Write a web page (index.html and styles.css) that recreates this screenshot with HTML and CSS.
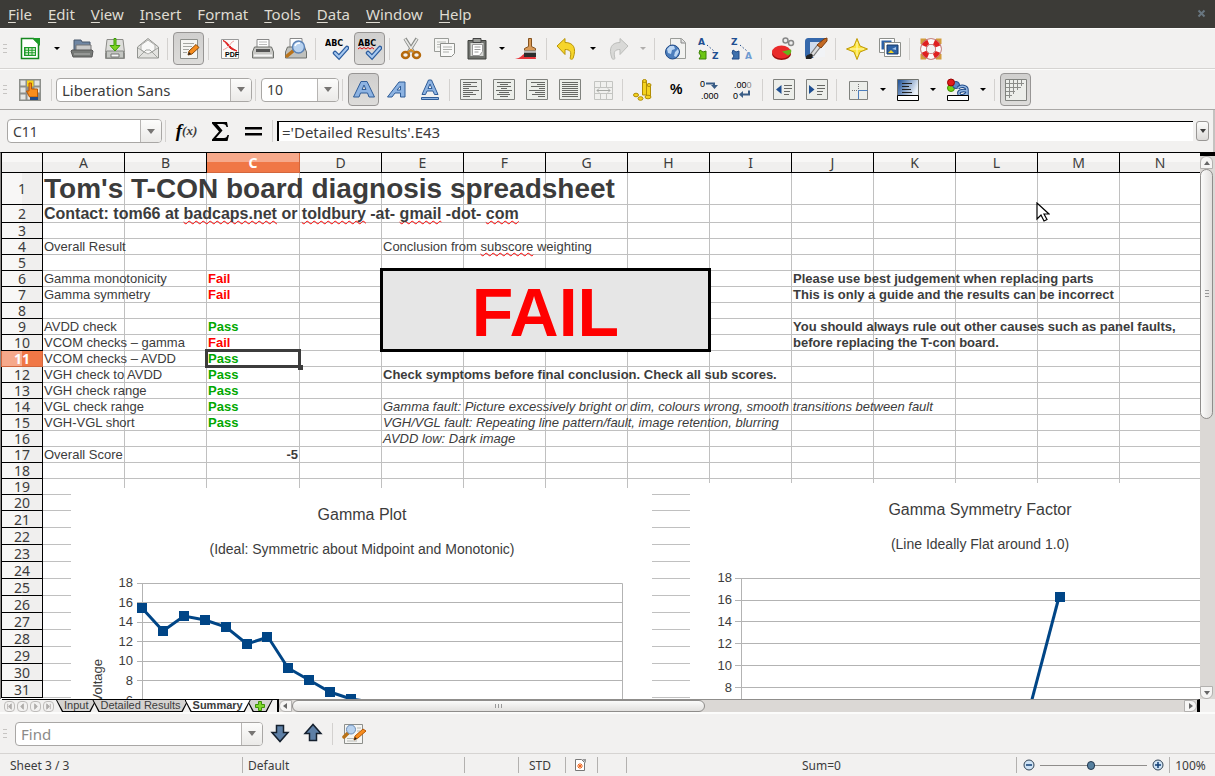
FILE: index.html
```
<!doctype html>
<html lang="en">
    <head>
        <meta charset="UTF-8" />
        <meta name="viewport" content="width=device-width, initial-scale=1.0" />
        <title>T-CON board diagnosis | Calc</title>
        <link rel="stylesheet" href="styles.css">
    </head>
    <body>
        <nav class="menubar">
            <button><u>F</u>ile</button>
            <button><u>E</u>dit</button>
            <button><u>V</u>iew</button>
            <button><u>I</u>nsert</button>
            <button>F<u>o</u>rmat</button>
            <button><u>T</u>ools</button>
            <button><u>D</u>ata</button>
            <button><u>W</u>indow</button>
            <button><u>H</u>elp</button>
            <button class="close" aria-label="Close">
                <svg width="10" height="10" viewBox="0 0 10 10"><path d="M1.500 1.500l6 6M7.500 1.500l-6 6" stroke="#68757f" stroke-width="2" /></svg>
            </button>
        </nav>

        <!-- standard toolbar -->
        <div class="toolbar">
            <span class="grip"></span>
            <button class="tool" aria-label="New">
                <svg viewBox="0 0 24 24"><path d="M3.500 1.500h12l5 5v15h-17z" fill="#fff" stroke="#16871f" stroke-width="1.500" /><path d="M14 1h8v8z" fill="#1d9a28" /><path d="M6 10h12v9H6z" fill="#1c9a28" /><path d="M7.500 12h2.500M11 12h2.500M14.500 12h2.500M7.500 14.500h2.500M11 14.500h2.500M14.500 14.500h2.500M7.500 17h2.500M11 17h2.500M14.500 17h2.500" stroke="#dff5d8" stroke-width="1.500" /></svg>
            </button>
            <button class="drop" aria-label="New options"></button>
            <button class="tool" aria-label="Open">
                <svg viewBox="0 0 24 24"><path d="M4 3h7l1 2h8v9H4z" fill="#6f86a3" stroke="#49566b" /><path d="M6 8h15v7H6z" fill="#c9c9c9" stroke="#777" /><path d="M2 13h20l1 1-1 6H3l-2-6z" fill="#777a77" stroke="#565656" /><path d="M4 17h16" stroke="#b5b5b5" /></svg>
            </button>
            <button class="tool" aria-label="Save">
                <svg viewBox="0 0 24 24"><path d="M4 2.500h16l1.500 13v6h-19v-6z" fill="#dededb" stroke="#8c8c88" /><path d="M3.500 14h17v7h-17z" fill="#c4c6c2" stroke="#858783" /><path d="M8 17h8v3H8z" fill="#f7f7f7" stroke="#777" /><path d="M11 1.500h2v7h4l-5 5.500-5-5.500h4z" fill="#7ed321" stroke="#3a9a08" /></svg>
            </button>
            <button class="tool" aria-label="E-mail">
                <svg viewBox="0 0 24 24"><path d="M1.500 10L12 1.500 22.500 10v11h-21z" fill="#e3e3e0" stroke="#929490" /><path d="M5 8l7-5 7 5v5l-7 4-7-4z" fill="#f8f8f7" stroke="#b0b0ad" /><path d="M2 21l8-8h4l8 8M2 11l8 5M22 11l-8 5" fill="none" stroke="#a3a5a1" /></svg>
            </button>
            <span class="sep"></span>
            <button class="tool on" aria-label="Edit file">
                <svg viewBox="0 0 24 24"><path d="M3.500 2.500h17v19h-17z" fill="#f5f5f3" stroke="#8d8f8b" /><path d="M6 6.500h11M6 9.500h9M6 12.500h6M6 15.500h4" stroke="#a4a6a2" /><path d="M11 18l1-4 7-6.500 3 3-7 6.500z" fill="#f78d1e" stroke="#8b4a08" /><path d="M11 18l1-3 2 2z" fill="#222" /></svg>
            </button>
            <span class="sep"></span>
            <button class="tool" aria-label="Export as PDF">
                <svg viewBox="0 0 24 24"><path d="M3.500 2.500h17v19h-17z" fill="#fbfbfa" stroke="#999" /><path d="M5 3.500c3 1 5 3 7 5.500s4 3 7 5c-4-1-7-2-9-5S7 5 5 3.500z" fill="#df2222" stroke="#df2222" /><path d="M16 4c-3 1-3 3-5 5s-4 3-6 4" fill="none" stroke="#f0a0a0" /><text x="7" y="20" font-size="7" font-weight="bold" font-family="Liberation Sans">PDF</text></svg>
            </button>
            <button class="tool" aria-label="Print">
                <svg viewBox="0 0 24 24"><path d="M6 2.500h12v9H6z" fill="#fff" stroke="#888" /><path d="M8 5h8M8 7.500h8" stroke="#bbb" /><path d="M3.500 10h17l2 5v6h-21v-6z" fill="#c8c8c5" stroke="#6e706c" /><path d="M5 12h14v3H5z" fill="#555" /><path d="M3 18.500h18" stroke="#f5f5f5" stroke-width="2" /></svg>
            </button>
            <button class="tool" aria-label="Page preview">
                <svg viewBox="0 0 24 24"><path d="M6 1.500h12v9H6z" fill="#fff" stroke="#888" /><path d="M3.500 10h17l2 5v6h-21v-6z" fill="#c0c1bd" stroke="#6e706c" /><path d="M9 14l-6 5" stroke="#b9731a" stroke-width="3.500" stroke-linecap="round" /><circle cx="14.500" cy="10" r="6" fill="#b8d2ef" stroke="#5b82b5" stroke-width="1.500" /><path d="M11 9c1-3 3-3 5-3" stroke="#fff" stroke-width="1.500" fill="none" /></svg>
            </button>
            <span class="sep"></span>
            <button class="tool" aria-label="Spelling and grammar">
                <svg viewBox="0 0 24 24"><text x="0" y="9" font-size="8" font-weight="bold" font-family="DejaVu Sans">ABC</text><path d="M10 16l4 4 8-9" fill="none" stroke="#2b5c9e" stroke-width="4.500" stroke-linecap="round" /><path d="M10 16l4 4 8-9" fill="none" stroke="#a6c8f0" stroke-width="2" stroke-linecap="round" /></svg>
            </button>
            <button class="tool on" aria-label="AutoSpellcheck">
                <svg viewBox="0 0 24 24"><text x="0" y="9" font-size="8" font-weight="bold" font-family="DejaVu Sans">ABC</text><path d="M0 12l2-1.500 2 1.500 2-1.500 2 1.500 2-1.500 2 1.500 2-1.500 2 1.500" fill="none" stroke="#e01010" /><path d="M10 16l4 4 8-9" fill="none" stroke="#2b5c9e" stroke-width="4.500" stroke-linecap="round" /><path d="M10 16l4 4 8-9" fill="none" stroke="#a6c8f0" stroke-width="2" stroke-linecap="round" /></svg>
            </button>
            <span class="sep"></span>
            <button class="tool" aria-label="Cut">
                <svg viewBox="0 0 24 24"><path d="M6 1.500L15 16M18 1.500L9 16" stroke="#8a8c88" stroke-width="3.500" /><path d="M6 2l9 14M18 2L9 16" stroke="#e8e8e6" stroke-width="1.500" /><ellipse cx="6.500" cy="18" rx="3.500" ry="3" fill="none" stroke="#b5690c" stroke-width="2.500" /><ellipse cx="17.500" cy="18" rx="3.500" ry="3" fill="none" stroke="#b5690c" stroke-width="2.500" /><path d="M9 15l3-2 3 2" stroke="#d98c21" stroke-width="2" fill="none" /></svg>
            </button>
            <button class="tool" aria-label="Copy">
                <svg viewBox="0 0 24 24"><path d="M2.500 1.500h14v13h-14z" fill="#f6f6f4" stroke="#9a9c98" /><path d="M5 5h9M5 7.500h9M5 10h4" stroke="#b9bbb7" /><path d="M8.500 6.500h14v10l-3 3h-11z" fill="#f9f9f8" stroke="#8d8f8b" /><path d="M11 10h9M11 12.500h9M11 15h6" stroke="#aeb0ac" /></svg>
            </button>
            <button class="tool" aria-label="Paste">
                <svg viewBox="0 0 24 24"><path d="M3 3.500h18v18.500H3z" fill="#70726e" stroke="#3f413d" /><path d="M5.500 6h13v13h-13z" fill="#d7d8d5" /><path d="M8 1.500h8v4H8z" fill="#989a96" stroke="#444" /><path d="M7.500 7.500h10v7l-3 4h-7z" fill="#fff" stroke="#999" /><path d="M9.500 10h6M9.500 12.500h6M9.500 15h4" stroke="#999" /></svg>
            </button>
            <button class="drop" aria-label="Paste options"></button>
            <button class="tool" aria-label="Format paintbrush">
                <svg viewBox="0 0 24 24"><path d="M0 22c6-1 7-4 9-5h11l1 5z" fill="#e8353b" /><path d="M13.500 1.500h3v8l4 2v2h-11v-2l4-2z" fill="#d89a58" stroke="#85531f" /><path d="M9 15.500h12V20H9z" fill="#2d2d2d" /><path d="M9 14.500h12" stroke="#bbb" stroke-width="2" /></svg>
            </button>
            <span class="sep"></span>
            <button class="tool" aria-label="Undo">
                <svg viewBox="0 0 24 24"><path d="M9 1.500v4c8 0 12 5 8 16-1 1-2 1-3 0 2-7 0-9-5-9v5L1 9z" fill="#f6d52c" stroke="#b89406" /></svg>
            </button>
            <button class="drop" aria-label="Undo history"></button>
            <button class="tool" aria-label="Redo">
                <svg viewBox="0 0 24 24"><path d="M14 1.500v4c-8 0-12 5-8 16 1 1 2 1 3 0-2-7 0-9 5-9v5L22 9z" fill="#d9d9d7" stroke="#bcbdba" /></svg>
            </button>
            <button class="drop faint" aria-label="Redo history"></button>
            <span class="sep"></span>
            <button class="tool" aria-label="Hyperlink">
                <svg viewBox="0 0 24 24"><path d="M6.500 1.500h11l4 4v16h-15z" fill="#f2f2f0" stroke="#9a9c98" /><path d="M17 2v4h4" fill="#ddd" stroke="#888" /><circle cx="8.500" cy="15" r="7" fill="#4c7ebd" stroke="#204a87" /><path d="M3 12l3-3 4 0 1 3-3 1-1 4-3-1zM11 15l3-3 1 3-3 5-2-1z" fill="#bcd6f3" /></svg>
            </button>
            <button class="tool" aria-label="Sort ascending">
                <svg viewBox="0 0 24 24"><text class="ltr" x="1" y="8">A</text><text class="ltr" x="15" y="22">Z</text><path d="M10 8l7 6" stroke="#204a87" stroke-dasharray="1.500 2" /><path d="M3 13l3 2 3-1v8H2l2-3-2-3z" fill="#6cc613" stroke="#3a8204" /></svg>
            </button>
            <button class="tool" aria-label="Sort descending">
                <svg viewBox="0 0 24 24"><text class="ltr" x="1" y="8">Z</text><text class="ltr pale" x="15" y="22">A</text><path d="M10 8l7 6" stroke="#204a87" stroke-dasharray="1.500 2" /><path d="M3 13l3 2 3-1v8H2l2-3-2-3z" fill="#3f71ad" stroke="#204a87" /></svg>
            </button>
            <span class="sep"></span>
            <button class="tool" aria-label="Insert chart">
                <svg viewBox="0 0 24 24"><ellipse cx="10.500" cy="17" rx="9.500" ry="6" fill="#9c0d0d" /><ellipse cx="10.500" cy="15" rx="9.500" ry="6.500" fill="#ea2a2a" /><path d="M11 14.500l9-2c1 3-1 5-3 6z" fill="#63b51a" /><circle cx="14.500" cy="3.500" r="2.500" fill="#eee" stroke="#888" stroke-width="1.500" /><circle cx="20" cy="6" r="2.500" fill="#eee" stroke="#888" stroke-width="1.500" /></svg>
            </button>
            <button class="tool" aria-label="Show draw functions">
                <svg viewBox="0 0 24 24"><path d="M1 5c0-3 1-4 4-4h17L9 21H4c-2 0-3-1-3-3z" fill="#3568ab" /><path d="M6 5h15v15H6z" fill="#f1f3f6" /><path d="M6 5h15L6 17z" fill="#cfdced" /><path d="M8 18l7-9" stroke="#777" stroke-width="4.500" /><path d="M8 18l7-9" stroke="#ddd" stroke-width="2.500" /><path d="M13 8l7-6 3-1v3l-6 7z" fill="#c36a24" stroke="#7d3c0b" /><path d="M2 22c-1-3 1-4 4-5s4 3 1 5z" fill="#222" /></svg>
            </button>
            <span class="sep"></span>
            <button class="tool" aria-label="Navigator">
                <svg viewBox="0 0 24 24"><path d="M12 1.500l3 7.500 7.500 3-7.500 3-3 7.500L9 15l-7.500-3L9 9z" fill="#fbe338" stroke="#bf9a06" /><path d="M12 5v14M5 12h14" stroke="#fff9c0" /></svg>
            </button>
            <button class="tool" aria-label="Gallery">
                <svg viewBox="0 0 24 24"><path d="M1.500 1.500h15v14h-15z" fill="#fff" stroke="#8d8f8b" /><path d="M3.500 3.500h10v9h-10z" fill="#2d61a5" /><path d="M6.500 5.500h16v14h-16z" fill="#fff" stroke="#8d8f8b" /><path d="M9 8h11v9H9z" fill="#2d61a5" stroke="#173a6b" /><path d="M10 16l3-3 3 3z" fill="#f4d325" /><path d="M14 12l4-2v3z" fill="#a5c5ec" /></svg>
            </button>
            <span class="sep"></span>
            <button class="tool" aria-label="Help">
                <svg viewBox="0 0 24 24"><path d="M3 7V3h4M17 3h4v4M21 17v4h-4M7 21H3v-4" fill="none" stroke="#d39c3b" stroke-width="3" /><circle cx="12" cy="12" r="7.500" fill="none" stroke="#b66" stroke-width="6.500" /><circle cx="12" cy="12" r="7.500" fill="none" stroke="#fafafa" stroke-width="5" /><circle cx="12" cy="12" r="7.500" fill="none" stroke="#df2020" stroke-width="5" stroke-dasharray="5.900 5.880" stroke-dashoffset="-2.900" /></svg>
            </button>
        </div>

        <!-- formatting toolbar -->
        <div class="toolbar format">
            <span class="grip"></span>
            <button class="tool" aria-label="Styles and formatting">
                <svg viewBox="0 0 24 24"><path d="M1 1h22v22H1z" fill="#8d8f8b" /><path d="M2.500 2.500h5v5h-5zM2.500 9.500h5v5h-5zM2.500 16.500h5v5h-5zM16.500 2.500h5v5h-5zM16.500 9.500h5v5h-5zM9.500 16.500h5v5h-5z" fill="#e5e6e3" /><path d="M9 2.500h6.500v6H9z" fill="#f7d31d" /><path d="M11 5h2.500v6h6v8h-8l-3-6h2.500z" fill="#f78d1e" stroke="#b55705" /><path d="M12 19h8v3h-8z" fill="#204a87" /></svg>
            </button>
            <span class="sep"></span>
            <div class="combo font">
                <input value="Liberation Sans" aria-label="Font name">
                <button aria-label="Font list"></button>
            </div>
            <span class="sep"></span>
            <div class="combo size">
                <input value="10" aria-label="Font size">
                <button aria-label="Size list"></button>
            </div>
            <span class="sep"></span>
            <button class="tool on" aria-label="Bold">
                <svg viewBox="0 0 24 24"><path class="glyph" fill-rule="evenodd" d="M1.500 19L9 3.500h6L22.500 19h-5.500l-1.500-4h-7L7 19zM10 11.500h4L12 7z" /></svg>
            </button>
            <button class="tool" aria-label="Italic">
                <svg viewBox="0 0 24 24"><path class="glyph" fill-rule="evenodd" d="M2.500 19L14 4h6v15h-4.500v-4H10l-3 4zM12 12h3.500V8z" /></svg>
            </button>
            <button class="tool" aria-label="Underline">
                <svg viewBox="0 0 24 24"><path class="glyph" fill-rule="evenodd" d="M4 16.500L10.500 2h3L20 16.500h-3.500l-1.500-3.500H9l-1.500 3.500zM10 10.500h4L12 6z" /><path class="glyph" d="M3.500 19.500h17v2h-17z" /></svg>
            </button>
            <span class="sep"></span>
            <button class="tool" aria-label="Align left">
                <svg viewBox="0 0 24 24"><path class="page" d="M1.500 1.500h21v20h-21z" /><path class="rows" d="M4 4.500h14M4 6.500h8M4 8.500h14M4 10.500h6M4 12.500h16M4 14.500h10M4 16.500h13M4 18.500h7" /></svg>
            </button>
            <button class="tool" aria-label="Align center">
                <svg viewBox="0 0 24 24"><path class="page" d="M1.500 1.500h21v20h-21z" /><path class="rows" d="M5 4.500h14M8 6.500h8M5 8.500h14M9 10.500h6M4 12.500h16M7 14.500h10M5 16.500h13M8 18.500h8" /></svg>
            </button>
            <button class="tool" aria-label="Align right">
                <svg viewBox="0 0 24 24"><path class="page" d="M1.500 1.500h21v20h-21z" /><path class="rows" d="M6 4.500h14M12 6.500h8M6 8.500h14M14 10.500h6M4 12.500h16M10 14.500h10M7 16.500h13M13 18.500h7" /></svg>
            </button>
            <button class="tool" aria-label="Justified">
                <svg viewBox="0 0 24 24"><path class="page" d="M1.500 1.500h21v20h-21z" /><path class="rows" d="M4 4.500h16M4 6.500h16M4 8.500h16M4 10.500h16M4 12.500h16M4 14.500h16M4 16.500h16M4 18.500h16" /></svg>
            </button>
            <button class="tool" aria-label="Merge cells">
                <svg viewBox="0 0 24 24"><path d="M3.500 3.500h18v18h-18zM3.500 9.500h18M3.500 15.500h18M9.500 3.500v6M15.500 3.500v6M9.500 15.500v6M15.500 15.500v6" fill="#f0f0ee" stroke="#c3c4c1" /><path d="M6 12.500h13M8 10.500l-2 2 2 2M17 10.500l2 2-2 2" fill="none" stroke="#a5a7a3" /></svg>
            </button>
            <span class="sep"></span>
            <button class="tool" aria-label="Currency">
                <svg viewBox="0 0 24 24"><g fill="#f4d21f" stroke="#b08c05"><path d="M10.500 3v14h4V3z" /><path d="M14.500 7v12h4V7z" /><ellipse cx="12.500" cy="3" rx="2" ry="1.500" /><ellipse cx="17" cy="7" rx="2" ry="1.500" /><ellipse cx="4" cy="17" rx="2.500" ry="1.800" /><ellipse cx="8.500" cy="20.500" rx="2.500" ry="1.800" /><ellipse cx="16" cy="19" rx="3" ry="1.800" /></g></svg>
            </button>
            <button class="tool" aria-label="Percent">
                <svg viewBox="0 0 24 24"><text x="5" y="16" font-size="14" font-weight="bold" font-family="Liberation Sans">%</text></svg>
            </button>
            <button class="tool" aria-label="Add decimal place">
                <svg viewBox="0 0 24 24"><text class="num" x="2" y="9">0</text><text class="num" x="3" y="21">.000</text><path d="M8 5.500h8v3" fill="none" stroke="#3a5d86" stroke-width="2" /><path d="M13 7h7l-3.500 4z" fill="#3a5d86" /></svg>
            </button>
            <button class="tool" aria-label="Delete decimal place">
                <svg viewBox="0 0 24 24"><text class="num" x="3" y="10">.00<tspan fill="#888">0</tspan></text><text class="num" x="2" y="21">0</text><path d="M11 16.500h7v-4" fill="none" stroke="#3a5d86" stroke-width="2" /><path d="M12 13v7l-4-3.500z" fill="#3a5d86" /></svg>
            </button>
            <span class="sep"></span>
            <button class="tool" aria-label="Decrease indent">
                <svg viewBox="0 0 24 24"><path class="page" d="M1.500 1.500h21v20h-21z" /><path class="rows" d="M12 7.500h8M12 10.500h8M12 13.500h6M12 16.500h5" /><path d="M9.500 7v9L4 11.500z" fill="#1f4f91" /></svg>
            </button>
            <button class="tool" aria-label="Increase indent">
                <svg viewBox="0 0 24 24"><path class="page" d="M1.500 1.500h21v20h-21z" /><path class="rows" d="M12 7.500h8M12 10.500h8M12 13.500h6M12 16.500h5" /><path d="M4 7v9l5.500-4.500z" fill="#1f4f91" /></svg>
            </button>
            <span class="sep"></span>
            <button class="tool" aria-label="Borders">
                <svg viewBox="0 0 24 24"><path class="page" d="M3.500 3.500h18v18h-18z" /><path d="M6 12.500h6.500M12.500 6v6" stroke="#777" stroke-dasharray="1 1" /><path d="M12.500 21v-8.500h9" fill="none" stroke="#4c7ebd" /></svg>
            </button>
            <button class="drop" aria-label="Border styles"></button>
            <button class="tool" aria-label="Background color">
                <svg viewBox="0 0 24 24"><defs><linearGradient id="shade" x2="1" y2=".4"><stop offset=".1" stop-color="#2a5a9c" /><stop offset="1" stop-color="#eaf0f7" /></linearGradient></defs><path d="M1.500 1.500h21v16h-21z" fill="url(#shade)" stroke="#70726e" /><path d="M6 5.500h10M6 8.500h7M6 11.500h9M6 14.500h10" stroke="#222" /><path d="M1.500 17.500h21v5h-21z" fill="#fff" stroke="#000" /></svg>
            </button>
            <button class="drop" aria-label="Background colors"></button>
            <button class="tool" aria-label="Font color">
                <svg viewBox="0 0 24 24"><circle cx="5" cy="10" r="3.500" fill="#73d216" stroke="#3f8c05" /><circle cx="10" cy="7" r="3.500" fill="#5b8ac6" stroke="#204a87" /><circle cx="5" cy="4.500" r="3.500" fill="#e01b1b" stroke="#900" /><path d="M12 10c3-3 9-2 9 2v6M21 13c-5-1-9 0-8 3s6 2 8-1" fill="none" stroke="#204a87" stroke-width="3.500" /><path d="M12 10c3-3 9-2 9 2v6M21 13c-5-1-9 0-8 3s6 2 8-1" fill="none" stroke="#92b7e4" stroke-width="1.500" /><path d="M1.500 17.500h21v5h-21z" fill="#fff" stroke="#000" /></svg>
            </button>
            <button class="drop" aria-label="Font colors"></button>
            <span class="sep"></span>
            <button class="tool on" aria-label="Grid lines">
                <svg viewBox="0 0 24 24"><path class="page" d="M1.500 1.500h21v21h-21z" /><path d="M2 5.500h18M2 9.500h15M2 13.500h9M2 17.500h6M5.500 2v18M9.500 2v14M13.500 2v10M17.500 2v6" stroke="#8b8d89" /></svg>
            </button>
        </div>

        <div class="formula">
            <div class="combo name">
                <input value="C11" aria-label="Name box">
                <button aria-label="Named ranges"></button>
            </div>
            <span class="sep"></span>
            <button class="tool fx" aria-label="Function wizard"><b>f</b><i>(x)</i></button>
            <button class="tool" aria-label="Sum">
                <svg viewBox="0 0 24 24"><path d="M4 3h15l1 5h-1.500c-.5-2-1.500-3-4-3H9l5.500 6.500L8 19h8c2 0 3-1 3.500-3H21l-1.500 6H4v-1.500l7-8-7-8z" /></svg>
            </button>
            <button class="tool" aria-label="Function">
                <svg viewBox="0 0 24 24"><path d="M4 8h17v2.500H4zM4 14h17v2.500H4z" /></svg>
            </button>
            <span class="sep"></span>
            <input class="line" value="='Detailed Results'.E43" aria-label="Input line">
            <button class="expand" aria-label="Expand formula bar"></button>
        </div>

        <main>
            <div class="view">
                <table id="grid"></table>

                <svg class="chart plot" width="581" height="300">
                    <rect width="581" height="300" fill="#fff" />
                    <text class="title" x="291" y="32">Gamma Plot</text>
                    <text class="sub" x="291" y="66">(Ideal: Symmetric about Midpoint and Monotonic)</text>
                    <path class="lines" d="M66 95.500h485.500v200M66 114.500h485M66 134.500h485M66 153.500h485M66 173.500h485M66 192.500h485M66 212.500h485M71.500 95v200" />
                    <g class="axis">
                        <text x="62" y="99">18</text>
                        <text x="62" y="119">16</text>
                        <text x="62" y="138">14</text>
                        <text x="62" y="158">12</text>
                        <text x="62" y="177">10</text>
                        <text x="62" y="197">8</text>
                        <text x="62" y="217">6</text>
                        <text transform="translate(31 171) rotate(-90)">Voltage</text>
                    </g>
                    <polyline class="series" points="71,120 92,143 113,128 134,132 155,139 176,156 197,149 217,180 238,192 259,204 280,211 301,214" />
                    <path class="marks" d="M66 115h10v10H66zM87 138h10v10H87zM108 123h10v10h-10zM129 127h10v10h-10zM150 134h10v10h-10zM171 151h10v10h-10zM191 144h10v10h-10zM212 175h10v10h-10zM233 187h10v10h-10zM254 199h10v10h-10zM275 206h10v10h-10z" />
                </svg>

                <svg class="chart symmetry" width="900" height="300">
                    <rect width="900" height="300" fill="#fff" />
                    <text class="title" x="290" y="32">Gamma Symmetry Factor</text>
                    <text class="sub" x="290" y="66">(Line Ideally Flat around 1.0)</text>
                    <path class="lines" d="M45 95.500h855M45 117.500h855M45 138.500h855M45 160.500h855M45 182.500h855M45 204.500h855M51.500 95v200" />
                    <g class="axis">
                        <text x="42" y="99">18</text>
                        <text x="42" y="121">16</text>
                        <text x="42" y="143">14</text>
                        <text x="42" y="165">12</text>
                        <text x="42" y="187">10</text>
                        <text x="42" y="209">8</text>
                    </g>
                    <path class="series" d="M369 114l-29 110" />
                    <path class="marks" d="M365 109h10v10h-10z" />
                </svg>

                <svg class="pointer" width="14" height="22" viewBox="0 0 14 22"><path d="M1 1v16l4-4 3 6 3-1.500-3-5.500h5z" fill="#fff" stroke="#000" stroke-width="1.200" /></svg>
            </div>
            <div class="vscroll">
                <button aria-label="Scroll up"></button>
                <div class="thumb"></div>
                <button class="down" aria-label="Scroll down"></button>
            </div>
        </main>

        <div class="sheetbar">
            <div class="nav">
                <button aria-label="First sheet"><svg viewBox="0 0 10 10"><path d="M3 2v6M7 2L4 5l3 3z" /></svg></button>
                <button aria-label="Previous sheet"><svg viewBox="0 0 10 10"><path d="M6 2L3 5l3 3z" /></svg></button>
                <button aria-label="Next sheet"><svg viewBox="0 0 10 10"><path d="M4 2l3 3-3 3z" /></svg></button>
                <button aria-label="Last sheet"><svg viewBox="0 0 10 10"><path d="M7 2v6M3 2l3 3-3 3z" /></svg></button>
            </div>
            <div class="tabs">
                <button class="tab"><span>Input</span></button>
                <button class="tab"><span>Detailed Results</span></button>
                <button class="tab current"><span>Summary</span></button>
                <button class="tab add" aria-label="Add sheet"><svg width="10" height="10" viewBox="0 0 10 10"><path d="M3.500.5h3v3h3v3h-3v3h-3v-3h-3v-3h3z" fill="#7fd62c" stroke="#3c9108" /></svg></button>
            </div>
            <div class="hscroll">
                <button aria-label="Scroll left"></button>
                <div class="thumb"></div>
                <button class="right" aria-label="Scroll right"></button>
            </div>
        </div>

        <div class="toolbar find">
            <span class="grip"></span>
            <div class="combo search">
                <input placeholder="Find" aria-label="Find">
                <button aria-label="Search history"></button>
            </div>
            <button class="tool" aria-label="Find next">
                <svg viewBox="0 0 24 24"><path d="M8.500 3.500h7v7h4.500l-8 9-8-9h4.500z" fill="#5d7fa6" stroke="#15202e" stroke-width="1.500" /></svg>
            </button>
            <button class="tool" aria-label="Find previous">
                <svg viewBox="0 0 24 24"><path d="M8.500 18.500h7v-7h4.500l-8-9-8 9h4.500z" fill="#5d7fa6" stroke="#15202e" stroke-width="1.500" /></svg>
            </button>
            <span class="sep"></span>
            <button class="tool" aria-label="Find and replace">
                <svg viewBox="0 0 24 24"><path d="M2.500 2.500h18v19h-18z" fill="#f5f5f3" stroke="#8d8f8b" /><path d="M5 16.500h8M5 19h10M15 6h4M15 9h3" stroke="#b5b7b3" /><path d="M6 11l-4 4" stroke="#b9731a" stroke-width="3.500" stroke-linecap="round" /><circle cx="9" cy="7.500" r="4.500" fill="#b8d2ef" stroke="#6a8bb5" /><path d="M12 18l1-4 8-7 3 2-8 7z" fill="#f78d1e" stroke="#b55705" /><path d="M12 18l1-3 2 2z" fill="#222" /></svg>
            </button>
        </div>

        <footer>
            <span class="sheet-no">Sheet 3 / 3</span>
            <span class="style">Default</span>
            <span class="insert"></span>
            <span class="std">STD</span>
            <span class="modified"><svg width="12" height="12" viewBox="0 0 12 12"><path d="M1.500.5h6l3 3v8h-9z" fill="#fff" stroke="#777" /><path d="M8 0h4v4z" fill="#999" /><path d="M3 7h6M6 4v6M4 5l4 4M8 5L4 9" stroke="#f0651a" /></svg></span>
            <span class="sign"></span>
            <span class="sum">Sum=0</span>
            <span class="zoom">
                <button aria-label="Zoom out"><svg width="12" height="12" viewBox="0 0 12 12"><circle cx="6" cy="6" r="5" fill="#cfe3f5" stroke="#345" /><path d="M3 6h6" stroke="#123f75" stroke-width="1.500" /></svg></button>
                <input type="range" min="0" max="100" value="48" aria-label="Zoom">
                <button aria-label="Zoom in"><svg width="12" height="12" viewBox="0 0 12 12"><circle cx="6" cy="6" r="5" fill="#cfe3f5" stroke="#345" /><path d="M3 6h6M6 3v6" stroke="#123f75" stroke-width="1.500" /></svg></button>
            </span>
            <span class="percent">100%</span>
        </footer>

        <script src="script.js"></script>
    </body>
</html>
```
FILE: styles.css
```
* {
    box-sizing: border-box;
}

html,
body {
    height: 100%;
    margin: 0;
}

body {
    display: flex;
    flex-direction: column;
    overflow: hidden;
    background: #f2f1f0;
    color: #3c3c3c;
    font-family: "Noto Sans", "Open Sans", sans-serif;
    font-size: 14px;
}

button,
input {
    margin: 0;
    padding: 0;
    border: none;
    background: none;
    color: inherit;
    font: inherit;
}

input:focus {
    outline: none;
}

/* menu */
.menubar {
    display: flex;
    flex: none;
    align-items: center;
    gap: 16px;
    height: 28px;
    padding: 0 8px;
    background: #3c3b37;
    color: #dfdbd2;
    font-size: 15px;
}

.menubar u {
    text-underline-offset: 2px;
}

.menubar .close {
    display: flex;
    margin-left: auto;
}

/* toolbars */
.toolbar {
    display: flex;
    flex: none;
    align-items: center;
    height: 41px;
    border-top: 1px solid #fcfcfb;
    border-bottom: 1px solid #d6d4d2;
}

.toolbar.format {
    border-bottom-color: #aaa8a6;
}

.grip {
    width: 4px;
    height: 10px;
    margin: 0 6px 0 3px;
    background: repeating-linear-gradient(#c6c4c2 0 1px, #f2f1f0 1px 4px);
}

.tool {
    display: flex;
    flex: none;
    align-items: center;
    justify-content: center;
    width: 31px;
    height: 33px;
    margin: 0 1px;
    border: 1px solid transparent;
    border-radius: 4px;
}

.grip + .tool {
    margin-right: 3px;
}

.tool svg {
    width: 24px;
    height: 24px;
}

.tool.on {
    border-color: #979594;
    background: linear-gradient(#d0cfce, #dddcda);
}

.drop {
    flex: none;
    width: 17px;
    height: 33px;
}

.drop::after {
    content: "";
    display: block;
    width: 0;
    margin: auto;
    border: 3px solid transparent;
    border-top-color: #000;
    border-bottom: none;
}

.drop.faint::after {
    border-top-color: #b0aeac;
}

.sep {
    flex: none;
    width: 1px;
    height: 22px;
    margin: 0 4px 0 3px;
    background: #d3d1cf;
}

.glyph {
    fill: #8db3e2;
    stroke: #2f5c97;
}

.page {
    fill: #eceeea;
    stroke: #80827e;
}

.rows {
    stroke: #666864;
}

.ltr {
    fill: #1f4f91;
    font: bold 9px "DejaVu Sans", sans-serif;
}

.ltr.pale {
    fill: #6f9bd1;
}

.num {
    font: 9px "Liberation Sans", sans-serif;
}

/* editable drop-downs */
.combo {
    display: flex;
    flex: none;
    height: 24px;
    border: 1px solid #a9a7a5;
    border-radius: 4px;
    background: #fff;
}

.combo input {
    flex: 1;
    min-width: 0;
    padding: 0 5px;
}

.combo button {
    width: 21px;
    border-left: 1px solid #b7b5b3;
    border-radius: 0 3px 3px 0;
    background: linear-gradient(#fcfcfb, #ebeae8);
}

.combo button::after,
.expand::after {
    content: "";
    display: block;
    width: 0;
    margin: auto;
    border: 4px solid transparent;
    border-top: 5px solid #777573;
    border-bottom: none;
}

.font {
    width: 196px;
    font-size: 15px;
}

.size {
    width: 78px;
    margin-left: 1px;
}

.name {
    width: 155px;
}

.search {
    width: 248px;
    font-size: 15px;
}

.search input::placeholder {
    color: #8c8a88;
    opacity: 1;
}

/* formula bar */
.formula {
    display: flex;
    flex: none;
    align-items: center;
    height: 42px;
    padding: 0 4px 0 7px;
    border-right: 2px solid #c4c2c0;
}

.fx b {
    color: #000;
    font: italic bold 19px "Liberation Serif", serif;
}

.fx i {
    font: italic bold 13px "Liberation Serif", serif;
}

.line {
    flex: 1;
    height: 20px;
    padding-left: 3px;
    border-top: 1px solid #000;
    border-left: 2px solid #000;
    background: #fff;
    font-size: 15px;
}

.expand {
    width: 13px;
    height: 20px;
    margin-left: 3px;
    border: 1px solid #999795;
    border-radius: 3px;
    background: linear-gradient(#fcfcfb, #dcdad8);
}

.expand::after {
    border-width: 4px 3px 0;
    border-top-color: #3c3c3c;
}

/* sheet */
main {
    display: flex;
    flex: 1;
    min-height: 0;
}

.view {
    position: relative;
    flex: 1;
    min-width: 0;
    overflow: hidden;
    border-top: 1px solid #000;
    border-left: 1px solid #8c8a88;
    background: #fff;
}

#grid {
    width: 100%;
    table-layout: fixed;
    border-spacing: 0;
    font: 13px "Liberation Sans", sans-serif;
}

#grid td,
#grid th {
    height: 16px;
    padding: 0;
    border: solid #c0c0c0;
    border-width: 0 1px 1px 0;
    line-height: 15px;
    white-space: nowrap;
}

#grid td {
    padding-left: 1px;
}

#grid th {
    border-color: #000;
    background: linear-gradient(90deg, #f8f7f6 50%, #f0efee 50%);
    font: 14px/15px "Noto Sans", "Open Sans", sans-serif;
}

#grid thead th {
    height: 20px;
    background: linear-gradient(#f8f7f6 50%, #f0efee 50%);
}

#grid th:first-child {
    border-left: 1px solid #000;
}

#grid td:last-child,
#grid thead th:last-child {
    border-right: none;
}

#grid thead th.picked {
    background: linear-gradient(#f6a98b 50%, #f07746 50%);
}

#grid tbody th.picked {
    background: linear-gradient(90deg, #f6a98b 50%, #f07746 50%);
}

#grid th.picked {
    border-color: #d2663c;
    color: #fff;
    font-weight: bold;
}

#grid .row-1 td {
    height: 32px;
    font-size: 28px;
    line-height: 31px;
    font-weight: bold;
}

#grid .row-2 td {
    height: 18px;
    font-size: 16px;
    line-height: 17px;
    font-weight: bold;
}

#grid .tall td {
    height: 17px;
}

#grid .bold {
    font-weight: bold;
}

#grid .italic {
    font-style: italic;
}

#grid .fail {
    color: #f00;
    font-weight: bold;
}

#grid .pass {
    color: #00a800;
    font-weight: bold;
}

#grid .right {
    padding-right: 1px;
    text-align: right;
    font-weight: bold;
}

#grid s {
    text-decoration: underline wavy #f00 1px;
    text-decoration-skip-ink: none;
}

#grid .verdict,
#grid .active {
    position: relative;
}

#grid .verdict {
    padding: 0;
}

.verdict div {
    position: absolute;
    inset: -3px -2px -2px -2px;
    display: flex;
    align-items: center;
    justify-content: center;
    padding-top: 5px;
    border: 3px solid #000;
    background: #e6e6e6;
    color: #f00;
    font-size: 68px;
    font-weight: bold;
}

.active::before {
    content: "";
    position: absolute;
    inset: -2px -2px -2px -2px;
    border: 3px solid #3c3c3c;
}

.active::after {
    content: "";
    position: absolute;
    right: -4px;
    bottom: -4px;
    width: 5px;
    height: 5px;
    background: #3c3c3c;
}

/* objects floating on the sheet */
.chart {
    position: absolute;
    fill: #3c3c3c;
    font-family: "Liberation Sans", sans-serif;
}

.plot {
    left: 70px;
    top: 335px;
}

.symmetry {
    left: 689px;
    top: 330px;
}

.chart .title {
    font-size: 16px;
    text-anchor: middle;
}

.chart .sub {
    font-size: 14px;
    text-anchor: middle;
}

.chart .axis {
    font-size: 13px;
    text-anchor: end;
}

.chart .lines {
    fill: none;
    stroke: #b3b3b3;
}

.chart .series {
    fill: none;
    stroke: #004586;
    stroke-width: 3px;
}

.chart .marks {
    fill: #004586;
}

.pointer {
    position: absolute;
    left: 1035px;
    top: 49px;
}

/* scroll bars */
.vscroll {
    display: flex;
    flex: none;
    flex-direction: column;
    width: 15px;
    padding-right: 2px;
    border-top: 4px solid #000;
    background: #dbd8d5;
}

.vscroll button,
.hscroll button {
    display: flex;
    flex: none;
    align-items: center;
    justify-content: center;
    width: 13px;
    height: 13px;
    border: 1px solid #b3b1af;
    border-radius: 6px 6px 0 0;
    background: #f6f5f4;
}

.vscroll button::after {
    content: "";
    border: 3px solid transparent;
    border-bottom: 4px solid #666;
    border-top: none;
}

.vscroll .down {
    margin-top: auto;
    border-radius: 0 0 6px 6px;
}

.vscroll .down::after {
    transform: rotate(180deg);
}

.thumb {
    display: flex;
    align-items: center;
    justify-content: center;
    border: 1px solid #8f8d8b;
    border-radius: 7px;
}

.vscroll .thumb {
    height: 46%;
    background: linear-gradient(90deg, #fbfbfa, #e2e0de);
}

.vscroll .thumb::after {
    content: "";
    width: 4px;
    height: 7px;
    background: repeating-linear-gradient(#999 0 1px, transparent 1px 3px);
}

.hscroll {
    display: flex;
    flex: 1;
    margin-right: 15px;
    border-top: 1px solid #8f8d8b;
    border-right: 3px solid #000;
    background: #dbd8d5;
}

.hscroll .thumb {
    width: 45%;
    height: 12px;
    background: linear-gradient(#fbfbfa, #e2e0de);
}

.hscroll .thumb::after {
    content: "";
    width: 7px;
    height: 4px;
    background: repeating-linear-gradient(90deg, #999 0 1px, transparent 1px 3px);
}

.hscroll button {
    height: 12px;
    border-radius: 6px 0 0 6px;
}

.hscroll button::after {
    content: "";
    border: 3px solid transparent;
    border-right: 4px solid #666;
    border-left: none;
}

.hscroll .right {
    margin-left: auto;
    border-radius: 0 6px 6px 0;
}

.hscroll .right::after {
    transform: rotate(180deg);
}

/* sheet tabs */
.sheetbar {
    display: flex;
    flex: none;
    height: 13px;
    padding-left: 2px;
}

.nav {
    display: flex;
    flex: none;
    gap: 2px;
    padding: 1px 2px 0;
    border-top: 1px solid #000;
}

.nav button {
    display: flex;
    width: 11px;
    height: 11px;
    border: 1px solid #bebcba;
    border-radius: 4px;
}

.nav svg {
    fill: #b0aeac;
    stroke: #b0aeac;
}

.tabs {
    display: flex;
    flex: none;
    border-top: 1px solid #000;
    border-right: 2px solid #000;
    padding-right: 4px;
    font: 11px "Liberation Sans", sans-serif;
}

.tab {
    position: relative;
    height: 12px;
    margin-right: -4px;
    padding: 0 8px 1px;
    background: #000;
    clip-path: polygon(0 0, 100% 0, calc(100% - 6px) 100%, 6px 100%);
    line-height: 11px;
}

.tab::before {
    content: "";
    position: absolute;
    inset: 0 1px 1px;
    background: #d5d3d1;
    clip-path: polygon(0 0, 100% 0, calc(100% - 6px) 100%, 6px 100%);
}

.tab span,
.tab svg {
    position: relative;
    display: block;
}

.tab.current {
    z-index: 1;
    font-weight: bold;
}

.tab.current::before {
    background: #fff;
}

.tab.add {
    margin-right: 0;
}

/* find bar and status bar */
.toolbar.find {
    height: 42px;
    border-top-width: 2px;
}

.find .grip {
    margin-right: 8px;
}

footer {
    display: flex;
    flex: none;
    align-items: center;
    height: 22px;
    font-size: 12px;
}

footer > span {
    display: flex;
    align-items: center;
    justify-content: center;
    height: 16px;
    border-left: 1px solid #b3b1af;
}

footer .sheet-no {
    justify-content: flex-start;
    width: 242px;
    padding-left: 10px;
    border: none;
}

footer .style {
    justify-content: flex-start;
    width: 222px;
    padding-left: 5px;
}

footer .insert {
    width: 54px;
    border-left-color: #b3b1af;
}

footer .std {
    width: 47px;
    padding-right: 4px;
}

footer .modified {
    width: 32px;
    padding-right: 4px;
}

footer .sign {
    width: 29px;
}

footer .sum {
    flex: 1;
    border-left: 1px solid #b3b1af;
}

footer .zoom {
    gap: 5px;
    width: 153px;
}

footer .zoom button {
    display: flex;
}

footer .zoom input {
    width: 107px;
    height: 12px;
    appearance: none;
    background: linear-gradient(#8f8d8b, #8f8d8b) center / 100% 1px no-repeat;
}

footer .zoom input::-webkit-slider-thumb {
    width: 8px;
    height: 9px;
    appearance: none;
    border: 1px solid #22384f;
    border-radius: 4px;
    background: #56809f;
}

footer .percent {
    width: 46px;
    padding-right: 4px;
}
```
FILE: script.js
```
const columns = "ABCDEFGHIJKLMN".split("");
const widths = [82, 82, 93, 82, 82, 82, 82, 82, 82, 82, 82, 82, 82];

// cell: [text, class]
const cells = {
    A1: ["Tom's T-CON board diagnosis spreadsheet"],
    A2: ["Contact: tom66 at <s>badcaps.net</s> or <s>toldbury</s> -at- <s>gmail</s> -dot- <s>com</s>"],
    A4: ["Overall Result"],
    A6: ["Gamma monotonicity"],
    A7: ["Gamma symmetry"],
    A9: ["AVDD check"],
    A10: ["VCOM checks – gamma"],
    A11: ["VCOM checks – AVDD"],
    A12: ["VGH check to AVDD"],
    A13: ["VGH check range"],
    A14: ["VGL check range"],
    A15: ["VGH-VGL short"],
    A17: ["Overall Score"],
    C6: ["Fail", "fail"],
    C7: ["Fail", "fail"],
    C9: ["Pass", "pass"],
    C10: ["Fail", "fail"],
    C11: ["Pass", "pass active"],
    C12: ["Pass", "pass"],
    C13: ["Pass", "pass"],
    C14: ["Pass", "pass"],
    C15: ["Pass", "pass"],
    C17: ["-5", "right"],
    E4: ["Conclusion from <s>subscore</s> weighting"],
    E6: ["<div>FAIL</div>", "verdict"],
    E12: ["Check symptoms before final conclusion. Check all sub scores.", "bold"],
    E14: ["Gamma fault: Picture excessively bright or dim, colours wrong, smooth transitions between fault", "italic"],
    E15: ["VGH/VGL fault: Repeating line pattern/fault, image retention, blurring", "italic"],
    E16: ["AVDD low: Dark image", "italic"],
    J6: ["Please use best judgement when replacing parts", "bold"],
    J7: ["This is only a guide and the results can be incorrect", "bold"],
    J9: ["You should always rule out other causes such as panel faults,", "bold"],
    J10: ["before replacing the T-con board.", "bold"],
};

let html = "<colgroup><col width=42>";
for (const width of widths) {
    html += `<col width=${width}>`;
}
html += "<col></colgroup><thead><tr><th></th>";
for (const col of columns) {
    html += `<th class="${col === "C" ? "picked" : ""}">${col}</th>`;
}
html += "</tr></thead><tbody>";

for (let row = 1; row <= 31; row++) {
    html += `<tr class="row-${row} ${row > 20 ? "tall" : ""}"><th class="${row === 11 ? "picked" : ""}">${row}</th>`;
    for (const col of columns) {
        // E6:H10 is one merged cell
        const merged = "EFGH".includes(col) && row >= 6 && row <= 10;
        if (merged && !(col === "E" && row === 6)) continue;
        const [text, cls] = cells[col + row] || ["", ""];
        html += `<td class="${cls || ""}"${merged ? " colspan=4 rowspan=5" : ""}>${text}</td>`;
    }
    html += "</tr>";
}
document.querySelector("#grid").innerHTML = html + "</tbody>";
```
